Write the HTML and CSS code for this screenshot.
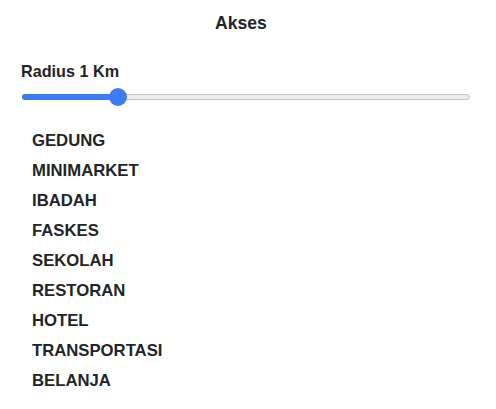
FILE: index.html
```html
<!DOCTYPE html>
<html>
<head>
<meta charset="utf-8">
<link rel="stylesheet" href="styles.css">
</head>
<body>
<div class="panel">
  <h2 class="title">Akses</h2>
  <div class="radius-label">Radius 1 Km</div>
  <div class="slider">
    <div class="track">
      <div class="fill" style="width: 95px"></div>
      <div class="thumb" style="left: 95px"></div>
    </div>
  </div>
  <ul class="list">
    <li>GEDUNG</li>
    <li>MINIMARKET</li>
    <li>IBADAH</li>
    <li>FASKES</li>
    <li>SEKOLAH</li>
    <li>RESTORAN</li>
    <li>HOTEL</li>
    <li>TRANSPORTASI</li>
    <li>BELANJA</li>
  </ul>
</div>
</body>
</html>
```

FILE: styles.css
```css
html, body {
  margin: 0;
  padding: 0;
  background: #ffffff;
}
body {
  font-family: "Liberation Sans", Arial, sans-serif;
  color: #212529;
}
.panel {
  display: flex;
  flex-direction: column;
  padding: 13px 26px 0 22px;
}
.title {
  margin: 0;
  font-size: 17.6px;
  font-weight: bold;
  line-height: 20px;
  text-align: center;
  padding-right: 10px;
}
.radius-label {
  margin-top: 29px;
  margin-left: -1px;
  font-size: 16.2px;
  font-weight: bold;
  line-height: 18px;
}
.slider {
  margin-top: 8px;
  height: 18px;
  display: flex;
  align-items: center;
}
.track {
  position: relative;
  flex: 1;
  height: 6px;
  box-sizing: border-box;
  border: 1px solid #c6c6c6;
  border-radius: 3px;
  background: #ececec;
}
.fill {
  position: absolute;
  left: -1px;
  top: -1px;
  height: 6px;
  border-radius: 3px 0 0 3px;
  background: #3b7cf5;
}
.thumb {
  position: absolute;
  top: 50%;
  width: 18px;
  height: 18px;
  border-radius: 50%;
  background: #3b7cf5;
  transform: translate(-50%, -50%);
}
.list {
  list-style: none;
  margin: 20px 0 0 10px;
  padding: 0;
}
.list li {
  font-size: 16.7px;
  font-weight: bold;
  line-height: 30px;
}
```
